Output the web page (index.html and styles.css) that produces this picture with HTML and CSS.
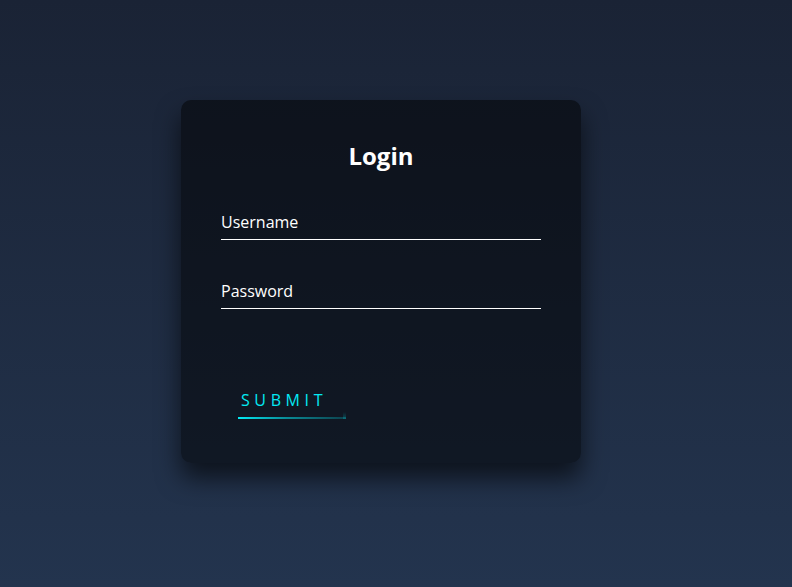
FILE: index.html
```html
<!DOCTYPE html>
<html lang="en">
<head>
<meta charset="utf-8">
<title>Login</title>
<link rel="stylesheet" href="styles.css">
</head>
<body>
<main class="page">
  <section class="login-box">
    <h2 class="title">Login</h2>
    <form class="form">
      <div class="field">
        <label class="label">Username</label>
      </div>
      <div class="field">
        <label class="label">Password</label>
      </div>
      <a class="submit" href="#">SUBMIT<span class="line-bottom"></span><span class="line-right"></span></a>
    </form>
  </section>
</main>
</body>
</html>
```
FILE: styles.css
```css
html, body {
  margin: 0;
  padding: 0;
  height: 100%;
}
body {
  background: linear-gradient(#1a2335, #23344e);
  font-family: "Open Sans", "Noto Sans", sans-serif;
  overflow: hidden;
}
.page {
  display: flex;
  justify-content: center;
  align-items: flex-start;
  padding: 100px 30px 0 0;
}
.login-box {
  width: 400px;
  box-sizing: border-box;
  padding: 40px 40px 43px;
  background: rgba(0, 0, 0, 0.5);
  border-radius: 10px;
  box-shadow: 0 15px 25px rgba(0, 0, 0, 0.6);
}
.title {
  margin: 0 0 30px;
  padding: 0;
  color: #fff;
  text-align: center;
  font-size: 24px;
  line-height: 31px;
  font-weight: 700;
}
.form {
  display: flex;
  flex-direction: column;
  align-items: flex-start;
}
.field {
  align-self: stretch;
  height: 38px;
  border-bottom: 1px solid #fff;
  margin-bottom: 30px;
  display: flex;
  align-items: center;
}
.label {
  color: #fff;
  font-size: 16px;
  line-height: 22px;
  margin-top: 4px;
}
.submit {
  position: relative;
  display: inline-block;
  margin-top: 40px;
  padding: 10px 20px 9px;
  color: #03e9f4;
  font-size: 16px;
  line-height: 22px;
  letter-spacing: 4.6px;
  text-decoration: none;
  text-transform: uppercase;
  overflow: hidden;
}
.line-bottom {
  position: absolute;
  left: 17px;
  bottom: 1px;
  width: 108px;
  height: 2px;
  background: linear-gradient(90deg, #03e9f4 0%, rgba(3, 233, 244, 0.55) 45%, rgba(3, 233, 244, 0.2) 100%);
}
.line-right {
  position: absolute;
  left: 122px;
  bottom: 1px;
  width: 3px;
  height: 7px;
  background: linear-gradient(0deg, rgba(3, 233, 244, 0.25), transparent);
}
```
